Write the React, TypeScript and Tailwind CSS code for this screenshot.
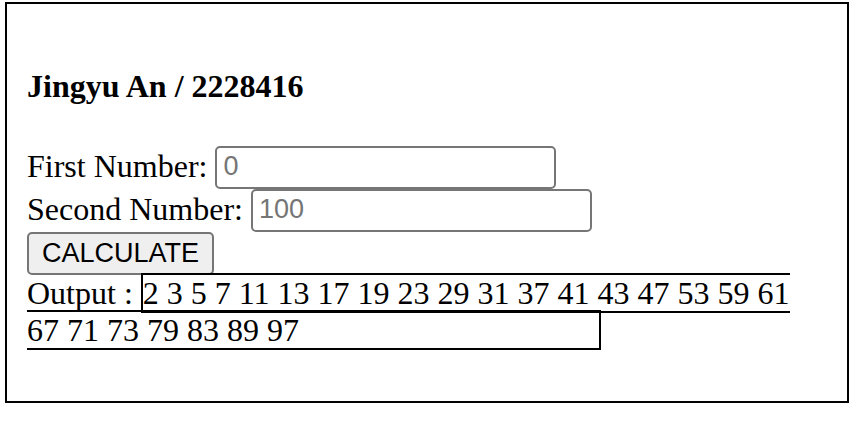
import { useState } from "react";

function primesBetween(first: number, second: number): number[] {
  const primes: number[] = [];
  for (let n = Math.max(2, first); n <= second; n++) {
    let prime = true;
    for (let d = 2; d * d <= n; d++) {
      if (n % d === 0) {
        prime = false;
        break;
      }
    }
    if (prime) primes.push(n);
  }
  return primes;
}

const inputClass =
  "h-[43px] w-[341px] rounded-[5px] border-2 border-[#767676] bg-white px-1.5 pb-0.5 font-['Liberation_Sans',Arial,sans-serif] text-[27px] leading-8 text-black placeholder:text-[#757575]";

export default function App() {
  const [first, setFirst] = useState("");
  const [second, setSecond] = useState("");
  const [output, setOutput] = useState(() => primesBetween(0, 100));

  const calculate = () =>
    setOutput(primesBetween(Number(first || 0), Number(second || 100)));

  return (
    <main className="mt-0.5 mr-1 ml-[5px] border-2 border-black bg-white px-5 pt-16 pb-[52px] font-['Liberation_Serif','Times_New_Roman',serif] text-[32px] leading-[37px] text-black">
      <h4 className="mb-[41px] font-bold">Jingyu An / 2228416</h4>
      <div className="flex items-start gap-2">
        <label htmlFor="first" className="leading-[41px]">
          First Number:
        </label>
        <input
          id="first"
          className={inputClass}
          placeholder="0"
          value={first}
          onChange={(e) => setFirst(e.target.value)}
        />
      </div>
      <div className="flex items-start gap-2">
        <label htmlFor="second" className="leading-[41px]">
          Second Number:
        </label>
        <input
          id="second"
          className={inputClass}
          placeholder="100"
          value={second}
          onChange={(e) => setSecond(e.target.value)}
        />
      </div>
      <button
        type="button"
        onClick={calculate}
        className="block h-[43px] w-[187px] rounded-[5px] border-2 border-[#767676] bg-[#efefef] pb-0.5 text-center font-['Liberation_Sans',Arial,sans-serif] text-[27px] leading-8"
      >
        CALCULATE
      </button>
      <p>
        Output :{" "}
        <output className="inline border-2 border-black pr-[300px]">
          {output.join(" ")}{" "}
        </output>
      </p>
    </main>
  );
}
